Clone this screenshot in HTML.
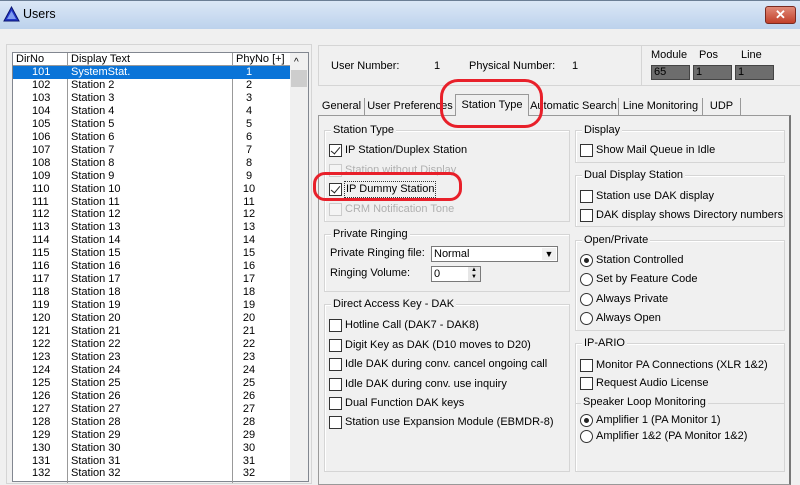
<!DOCTYPE html><html><head><style>
*{box-sizing:border-box}
body{margin:0;width:800px;height:479px;overflow:hidden;background:#f0f0f0;font-family:"Liberation Sans",sans-serif;font-size:11px;line-height:17px;color:#000;position:relative}
.a{position:absolute;white-space:nowrap}
.title{left:0;top:0;width:800px;height:29px;background:linear-gradient(#dbe7f6,#bcd2ec);border-top:1px solid #6b7e95}
.gb{position:absolute;border:1px solid #d5d5d5;box-shadow:inset 1px 1px 0 #fff}
.gl{position:absolute;top:-9px;left:6px;background:#f0f0f0;padding:0 2px}
.cb{position:absolute;width:13px;height:13px;border:1px solid #333;background:#fff}
.cb.d{border-color:#ccc;background:#f4f4f4}
.ck::after{content:"";position:absolute;left:3px;top:0px;width:4px;height:8px;border:solid #222;border-width:0 1.5px 1.5px 0;transform:rotate(40deg)}
.rb{position:absolute;width:13px;height:13px;border:1px solid #333;border-radius:50%;background:#fff}
.rb.on::after{content:"";position:absolute;left:3px;top:3px;width:5px;height:5px;border-radius:50%;background:#222}
.row{position:absolute;left:13px;width:277px;height:13px;line-height:13px}
.row span{position:absolute}
.tab{position:absolute;top:98px;height:18px;line-height:16px;border-right:1px solid #999;text-align:center}
</style></head><body>
<div class="a title"></div>
<svg class="a" style="left:3px;top:6px" width="17" height="16"><polygon points="8.5,1 16,15 1,15" fill="#2238c8" stroke="#0a1470"/><polygon points="8.5,5 13,13 4,13" fill="#7f9cf0"/></svg>
<div class="a" style="left:23px;top:6px;font-size:12.5px">Users</div>
<div class="a" style="left:765px;top:6px;width:31px;height:18px;border-radius:3px;background:linear-gradient(#e08a78,#c2402a);border:1px solid #7a2a20;color:#fff;font-weight:bold;text-align:center;line-height:15px;font-size:13px">✕</div>
<div class="a" style="left:6px;top:44px;width:306px;height:440px;border:1px solid #d5d5d5"></div>
<!-- list -->
<div class="a" style="left:12px;top:52px;width:297px;height:430px;border:1px solid #828790;background:#fff"></div>
<div class="a" style="left:13px;top:53px;width:277px;height:13px;border-bottom:1px solid #999;line-height:12px">
<span class="a" style="left:3px">DirNo</span><span class="a" style="left:58px">Display Text</span><span class="a" style="left:223px">PhyNo [+]</span></div>
<div class="a" style="left:67px;top:53px;width:1px;height:430px;background:#999"></div>
<div class="a" style="left:232px;top:53px;width:1px;height:430px;background:#999"></div>
<div class="a" style="left:290px;top:53px;width:18px;height:428px;background:#f0f0f0"></div>
<div class="a" style="left:294px;top:54px;font-size:10px">^</div>
<div class="a" style="left:291px;top:70px;width:16px;height:17px;background:#cdcdcd"></div>
<div class="a" style="left:13px;top:66px;width:277px;height:13px;background:#0a74d8"></div>
<div id="rows"></div>
<script>
var h="";for(var i=0;i<32;i++){var n=i+1,c=i==0?"color:#fff":"";h+='<div class="row" style="top:'+(66+i*12.95)+'px;'+c+'"><span style="left:19px">'+(101+i)+'</span><span style="left:58px">'+(i==0?"SystemStat.":"Station "+n)+'</span><span style="left:236px;width:0"><span style="position:absolute;left:0;transform:translateX(-50%)">'+n+'</span></span></div>';}
document.getElementById("rows").innerHTML=h;
</script>
<!-- top info -->
<div class="a" style="left:318px;top:45px;width:490px;height:41px;border:1px solid #d5d5d5"></div>
<div class="a" style="left:641px;top:45px;width:1px;height:41px;background:#d5d5d5"></div>
<div class="a" style="left:331px;top:58px">User Number:</div>
<div class="a" style="left:434px;top:58px">1</div>
<div class="a" style="left:469px;top:58px">Physical Number:</div>
<div class="a" style="left:572px;top:58px">1</div>
<div class="a" style="left:651px;top:47px">Module</div><div class="a" style="left:699px;top:47px">Pos</div><div class="a" style="left:741px;top:47px">Line</div>
<div class="a" style="left:651px;top:65px;width:39px;height:15px;background:#6d6d6d;border:1px solid #444;padding-left:2px;line-height:13px">65</div>
<div class="a" style="left:693px;top:65px;width:39px;height:15px;background:#6d6d6d;border:1px solid #444;padding-left:2px;line-height:13px">1</div>
<div class="a" style="left:735px;top:65px;width:39px;height:15px;background:#6d6d6d;border:1px solid #444;padding-left:2px;line-height:13px">1</div>
<!-- tabs -->
<div class="a" style="left:318px;top:115px;width:473px;height:370px;border:1px solid #999;border-right:2px solid #777"></div>
<div class="tab" style="left:319px;width:46px">General</div>
<div class="tab" style="left:365px;width:91px">User Preferences</div>
<div class="a" style="left:455px;top:94px;width:74px;height:22px;background:#f0f0f0;border:1px solid #999;border-bottom:none;text-align:center;line-height:20px">Station Type</div>
<div class="tab" style="left:529px;width:90px">Automatic Search</div>
<div class="tab" style="left:619px;width:84px">Line Monitoring</div>
<div class="tab" style="left:703px;width:38px">UDP</div>
<!-- Station type group -->
<div class="gb" style="left:324px;top:130px;width:246px;height:92px"><span class="gl">Station Type</span></div>
<div class="cb ck" style="left:329px;top:144px"></div><div class="a" style="left:345px;top:142px">IP Station/Duplex Station</div>
<div class="cb d" style="left:329px;top:164px"></div><div class="a" style="left:345px;top:162px;color:#b0b0b0">Station without Display</div>
<div class="cb ck" style="left:329px;top:183px"></div><div class="a" style="left:344px;top:181px;border:1px dotted #333;padding:0 1px;line-height:15px">IP Dummy Station</div>
<div class="cb d" style="left:329px;top:203px"></div><div class="a" style="left:345px;top:201px;color:#b0b0b0">CRM Notification Tone</div>
<!-- private ringing -->
<div class="gb" style="left:324px;top:234px;width:246px;height:58px"><span class="gl">Private Ringing</span></div>
<div class="a" style="left:330px;top:245px">Private Ringing file:</div>
<div class="a" style="left:431px;top:246px;width:127px;height:16px;border:1px solid #7a7a7a;background:#fff;padding-left:2px;line-height:14px">Normal<span style="position:absolute;right:1px;top:1px;width:14px;height:12px;background:#f0f0f0;font-size:9px;text-align:center;line-height:12px">▼</span></div>
<div class="a" style="left:330px;top:265px">Ringing Volume:</div>
<div class="a" style="left:431px;top:266px;width:50px;height:16px;border:1px solid #7a7a7a;background:#fff;padding-left:2px;line-height:14px">0<span style="position:absolute;right:0;top:0;width:12px;height:14px;background:#e6e6e6;font-size:6px;line-height:7px;text-align:center">▲<br>▼</span></div>
<!-- DAK -->
<div class="gb" style="left:324px;top:304px;width:246px;height:168px"><span class="gl">Direct Access Key - DAK</span></div>
<div class="cb" style="left:329px;top:319px"></div><div class="a" style="left:345px;top:317px">Hotline Call (DAK7 - DAK8)</div>
<div class="cb" style="left:329px;top:339px"></div><div class="a" style="left:345px;top:337px">Digit Key as DAK (D10 moves to D20)</div>
<div class="cb" style="left:329px;top:358px"></div><div class="a" style="left:345px;top:356px">Idle DAK during conv. cancel ongoing call</div>
<div class="cb" style="left:329px;top:378px"></div><div class="a" style="left:345px;top:376px">Idle DAK during conv. use inquiry</div>
<div class="cb" style="left:329px;top:397px"></div><div class="a" style="left:345px;top:395px">Dual Function DAK keys</div>
<div class="cb" style="left:329px;top:416px"></div><div class="a" style="left:345px;top:414px">Station use Expansion Module (EBMDR-8)</div>
<!-- Right groups -->
<div class="gb" style="left:575px;top:130px;width:210px;height:33px"><span class="gl">Display</span></div>
<div class="cb" style="left:580px;top:144px"></div><div class="a" style="left:596px;top:142px">Show Mail Queue in Idle</div>
<div class="gb" style="left:575px;top:175px;width:210px;height:52px"><span class="gl">Dual Display Station</span></div>
<div class="cb" style="left:580px;top:190px"></div><div class="a" style="left:596px;top:188px">Station use DAK display</div>
<div class="cb" style="left:580px;top:209px"></div><div class="a" style="left:596px;top:207px">DAK display shows Directory numbers</div>
<div class="gb" style="left:575px;top:240px;width:210px;height:91px"><span class="gl">Open/Private</span></div>
<div class="rb on" style="left:580px;top:254px"></div><div class="a" style="left:596px;top:252px">Station Controlled</div>
<div class="rb" style="left:580px;top:273px"></div><div class="a" style="left:596px;top:271px">Set by Feature Code</div>
<div class="rb" style="left:580px;top:293px"></div><div class="a" style="left:596px;top:291px">Always Private</div>
<div class="rb" style="left:580px;top:312px"></div><div class="a" style="left:596px;top:310px">Always Open</div>
<div class="gb" style="left:575px;top:343px;width:210px;height:129px"><span class="gl">IP-ARIO</span></div>
<div class="cb" style="left:580px;top:359px"></div><div class="a" style="left:596px;top:357px">Monitor PA Connections (XLR 1&amp;2)</div>
<div class="cb" style="left:580px;top:377px"></div><div class="a" style="left:596px;top:375px">Request Audio License</div>
<div class="a" style="left:576px;top:403px;width:208px;height:1px;background:#d5d5d5"></div>
<div class="a" style="left:581px;top:394px;background:#f0f0f0;padding:0 2px">Speaker Loop Monitoring</div>
<div class="rb on" style="left:580px;top:414px"></div><div class="a" style="left:596px;top:412px">Amplifier 1 (PA Monitor 1)</div>
<div class="rb" style="left:580px;top:430px"></div><div class="a" style="left:596px;top:428px">Amplifier 1&amp;2 (PA Monitor 1&amp;2)</div>
<!-- red highlights -->
<div class="a" style="left:440px;top:79px;width:103px;height:49px;border:3px solid #e8202a;border-radius:18px"></div>
<div class="a" style="left:313px;top:172px;width:149px;height:29px;border:3px solid #e8202a;border-radius:12px"></div>
</body></html>
